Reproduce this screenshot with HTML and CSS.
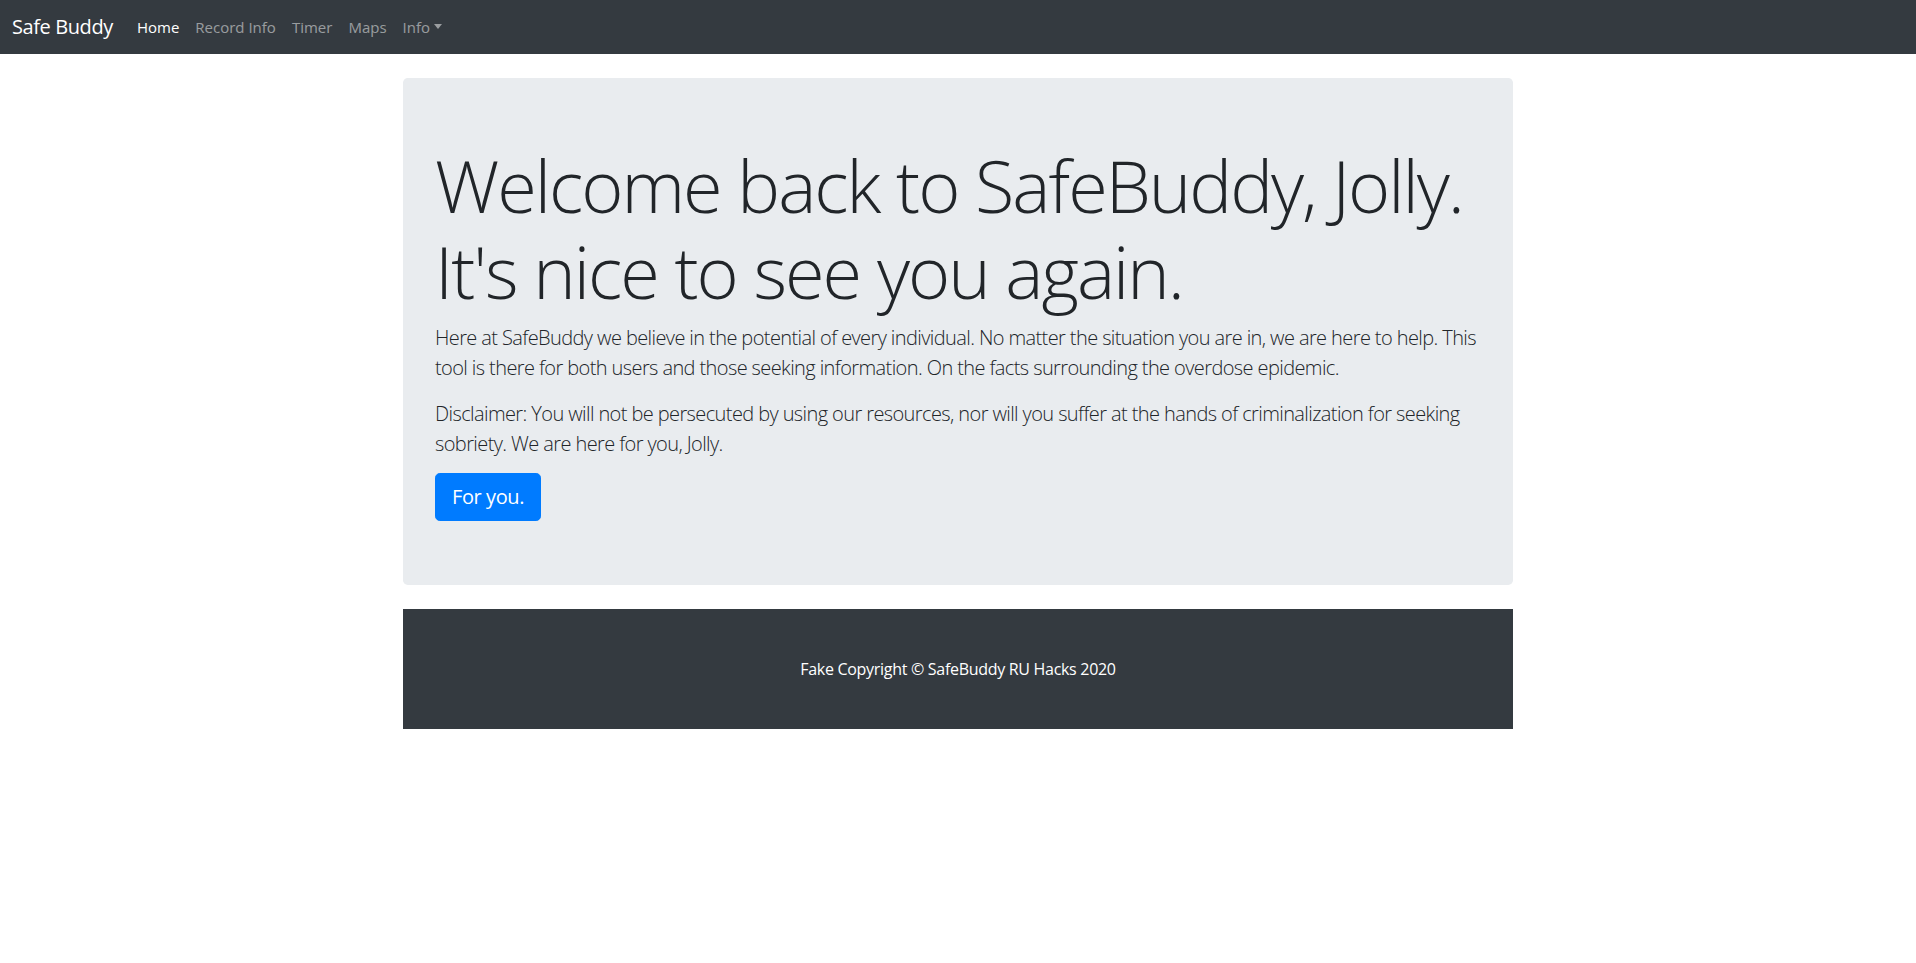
FILE: index.html
```html
<!DOCTYPE html>
<html lang="en">
<head>
<meta charset="utf-8">
<title>Safe Buddy</title>
<link rel="stylesheet" href="styles.css">
</head>
<body>
<nav class="navbar">
  <a class="brand" href="#">Safe Buddy</a>
  <ul class="nav">
    <li><a class="nav-link active" href="#">Home</a></li>
    <li><a class="nav-link" href="#">Record Info</a></li>
    <li><a class="nav-link" href="#">Timer</a></li>
    <li><a class="nav-link" href="#">Maps</a></li>
    <li><a class="nav-link dropdown-toggle" href="#">Info</a></li>
  </ul>
</nav>
<main class="container">
  <section class="jumbotron">
    <h1 class="display">Welcome back to SafeBuddy, Jolly.<br>It's nice to see you again.</h1>
    <p class="lead">Here at SafeBuddy we believe in the potential of every individual. No matter the situation you are in, we are here to help. This tool is there for both users and those seeking information. On the facts surrounding the overdose epidemic.</p>
    <p class="lead">Disclaimer: You will not be persecuted by using our resources, nor will you suffer at the hands of criminalization for seeking sobriety. We are here for you, Jolly.</p>
    <a class="btn" href="#">For you.</a>
  </section>
  <footer class="footer">
    <p>Fake Copyright &copy; SafeBuddy RU Hacks 2020</p>
  </footer>
</main>
</body>
</html>
```

FILE: styles.css
```css
* { box-sizing: border-box; }
html, body { margin: 0; padding: 0; }
body {
  font-family: "Open Sans", "Noto Sans", "Liberation Sans", sans-serif;
  font-size: 16px;
  line-height: 24px;
  color: #212529;
  background: #fff;
}
a { text-decoration: none; }

.navbar {
  display: flex;
  align-items: center;
  height: 54px;
  padding: 0 16px 0 12px;
  background: #343a40;
}
.brand {
  color: #fff;
  font-size: 20px;
  line-height: 30px;
  margin-right: 16px;
  letter-spacing: -0.4px;
}
.nav {
  display: flex;
  list-style: none;
  margin: 0;
  padding: 0;
}
.nav-link {
  display: block;
  padding: 7px 8px;
  color: rgba(255,255,255,.5);
  font-size: 15px;
  line-height: 24px;
  letter-spacing: 0;
}
.nav-link.active { color: #fff; }
.dropdown-toggle::after {
  content: "";
  display: inline-block;
  margin-left: 4px;
  vertical-align: 4px;
  border-top: 5px solid;
  border-left: 4.5px solid transparent;
  border-right: 4.5px solid transparent;
}

.container {
  width: 1140px;
  margin: 0 auto;
  padding: 24px 15px 0;
}
.jumbotron {
  background: #e9ecef;
  border-radius: 4.8px;
  padding: 64px 32px;
  margin-bottom: 24px;
}
.display {
  margin: 0 0 8px;
  font-size: 72px;
  line-height: 86.4px;
  font-weight: 300;
  letter-spacing: -2px;
  white-space: nowrap;
}
.lead {
  margin: 0 0 16px;
  font-size: 20px;
  line-height: 30px;
  font-weight: 300;
  letter-spacing: -0.6px;
}
.btn {
  display: inline-block;
  vertical-align: top;
  margin-top: -2px;
  padding: 8px 16px;
  font-size: 20px;
  line-height: 30px;
  color: #fff;
  background: #007bff;
  border: 1px solid #007bff;
  border-radius: 4.8px;
  letter-spacing: -0.4px;
}

.footer {
  background: #343a40;
  color: #fff;
  text-align: center;
  padding: 48px 0;
}
.footer p {
  margin: 0;
  font-size: 16px;
  line-height: 24px;
  letter-spacing: -0.3px;
}
```
